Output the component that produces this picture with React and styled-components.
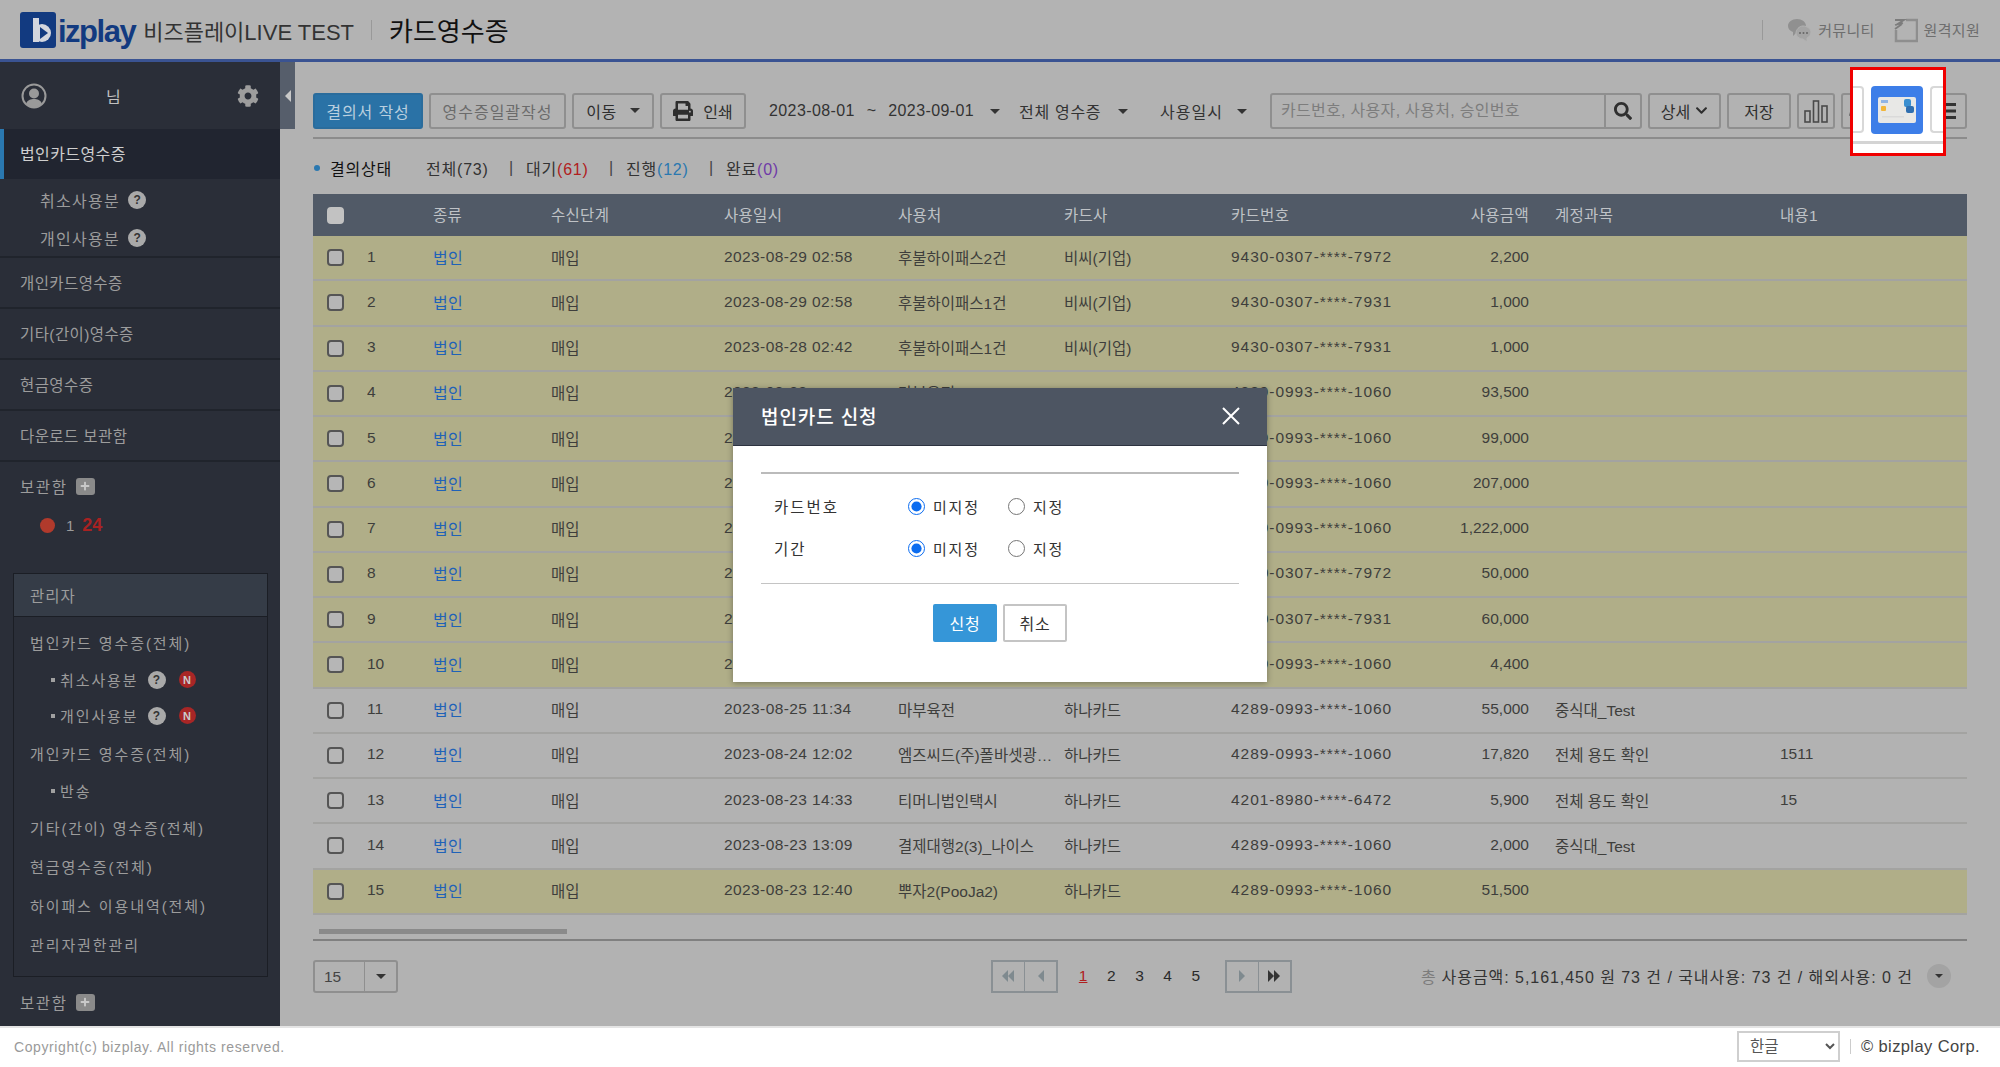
import React from "react";
import styled, { createGlobalStyle } from "styled-components";
import { FaPrint, FaSearch, FaCog, FaChevronDown, FaPlus } from "react-icons/fa";

const FONT = `"Liberation Sans", "Noto Sans CJK KR", sans-serif`;

const Global = createGlobalStyle`
  html, body { margin: 0; padding: 0; height: 100%; }
  body { font-family: ${FONT}; font-size: 16px; background: #fff; overflow: hidden; }
  #root { height: 100%; }
  * { box-sizing: border-box; }
`;

const Page = styled.div`
  position: relative;
  width: 2000px;
  height: 1067px;
  display: flex;
  flex-direction: column;
  overflow: hidden;
`;

const Header = styled.header`
  height: 62px;
  flex: none;
  display: flex;
  align-items: center;
  padding: 0 20px 0 20px;
  background: #b3b3b3;
  border-bottom: 3px solid #3a5392;
`;
const LogoText = styled.span`
  font-size: 31px;
  font-weight: 700;
  color: #123a80;
  letter-spacing: -1.5px;
  margin: 4px 0 0 2px;
  line-height: 1;
`;
const ServiceName = styled.span`
  font-size: 22px;
  color: #333;
  margin-left: 8px;
`;
const HeadDivider = styled.span`
  width: 1px;
  height: 20px;
  background: #999;
  margin: 0 ${(p) => p.$space || 17}px;
`;
const PageName = styled.span`
  font-size: 26px;
  color: #111;
`;
const HeadRight = styled.div`
  margin-left: auto;
  display: flex;
  align-items: center;
  color: #6e6e6e;
  font-size: 15px;
  letter-spacing: 0.3px;
`;
const HeadLink = styled.span`
  display: flex;
  align-items: center;
  gap: 6px;
  margin-right: 19px;
  &:last-child { margin-right: 0; }
`;

const Body = styled.div`
  flex: 1;
  display: flex;
  min-height: 0;
`;

const Sidebar = styled.aside`
  position: relative;
  width: 280px;
  flex: none;
  background: #2a2e38;
  color: #9c9c9c;
  font-size: 15.5px;
`;
const Handle = styled.span`
  position: absolute;
  left: 280px;
  top: 0;
  width: 15px;
  height: 67px;
  background: #565e6b;
  display: flex;
  align-items: center;
  justify-content: center;
`;
const Profile = styled.div`
  height: 67px;
  display: flex;
  align-items: center;
  padding: 0 21px 0 21px;
  color: #c0c0c0;
`;
const ProfileName = styled.span`
  margin-left: 59px;
  flex: 1;
  font-size: 16px;
`;
const ActiveItem = styled.div`
  height: 50px;
  display: flex;
  align-items: center;
  padding: 0 0 2px 16px;
  background: #212530;
  border-left: 4px solid #2a78b0;
  color: #cfcfcf;
  font-size: 16px;
  letter-spacing: 0.4px;
`;
const SubBlock = styled.div`
  padding-top: 2px;
  height: 79px;
  border-bottom: 2px solid #20242c;
`;
const SubItem = styled.div`
  height: 38px;
  display: flex;
  align-items: center;
  gap: 8px;
  padding-left: 40px;
  font-size: 16px;
  letter-spacing: 1.3px;
`;
const Help = styled.span`
  width: 18px;
  height: 18px;
  border-radius: 50%;
  background: #a9a9a9;
  color: #333;
  font-size: 12px;
  font-weight: 700;
  letter-spacing: 0;
  display: flex;
  align-items: center;
  justify-content: center;
  margin-left: ${(p) => p.$left || 0}px;
`;
const NavItem = styled.div`
  height: 51px;
  display: flex;
  align-items: center;
  padding: 0 0 2px 20px;
  border-bottom: 2px solid #20242c;
  font-size: 15.5px;
  letter-spacing: 0.4px;
`;
const BoxRow = styled.div`
  height: 38px;
  display: flex;
  align-items: center;
  gap: 8px;
  padding: 0 0 2px 20px;
  margin-top: ${(p) => p.$top || 0}px;
  font-size: 15.5px;
  letter-spacing: 1.6px;
`;
const PlusBtn = styled.span`
  width: 19px;
  height: 17px;
  border-radius: 3px;
  background: #8a8a8a;
  color: #c9c9c9;
  display: flex;
  align-items: center;
  justify-content: center;
  font-size: 10px;
`;
const FolderRow = styled.div`
  height: 38px;
  display: flex;
  align-items: center;
  padding-left: 40px;
  font-size: 15px;
`;
const FolderDot = styled.span`
  width: 15px;
  height: 15px;
  border-radius: 50%;
  background: #b13a2c;
  margin-right: 11px;
`;
const FolderCount = styled.b`
  color: #a82222;
  font-size: 18px;
  margin-left: 8px;
`;
const AdminBox = styled.div`
  width: 255px;
  height: 404px;
  margin: 29px 0 7px 13px;
  border: 1px solid #1b1e25;
`;
const AdminHead = styled.div`
  height: 43px;
  display: flex;
  align-items: center;
  padding-left: 16px;
  background: #353c47;
  border-bottom: 1px solid #1b1e25;
  font-size: 15.5px;
  letter-spacing: 1px;
`;
const AdminList = styled.div`
  padding-top: 6px;
`;
const AdminItem = styled.div`
  height: 38.8px;
  display: flex;
  align-items: center;
  padding-left: 16px;
  font-size: 15px;
  letter-spacing: 1.9px;
`;
const AdminSub = styled.div`
  height: 36px;
  display: flex;
  align-items: center;
  padding-left: 37px;
  font-size: 15px;
  letter-spacing: 1.9px;
  &::before {
    content: "";
    width: 4px;
    height: 4px;
    background: #a0a0a0;
    margin-right: 5px;
  }
`;
const NewBadge = styled.span`
  width: 17px;
  height: 17px;
  border-radius: 50%;
  background: #a82626;
  color: #ccc;
  font-size: 11px;
  font-weight: 700;
  letter-spacing: 0;
  display: flex;
  align-items: center;
  justify-content: center;
  margin-left: 13px;
`;

const Main = styled.main`
  flex: 1;
  min-width: 0;
  padding: 31px 33px 0;
  background: #b2b2b2;
  color: #3c3c3c;
`;
const Toolbar = styled.div`
  display: flex;
  gap: 6px;
  height: 46px;
  padding-bottom: 8px;
  border-bottom: 2px solid #8c8c8c;
`;
const Btn = styled.span`
  width: ${(p) => p.$w}px;
  height: 36px;
  flex: none;
  display: flex;
  align-items: center;
  justify-content: center;
  gap: ${(p) => p.$gap || 0}px;
  padding-bottom: 1px;
  border: 2px solid ${(p) => (p.$primary ? "#2a6c9c" : "#8f8f8f")};
  border-radius: 3px;
  background: ${(p) => (p.$primary ? "#2a72a6" : "transparent")};
  color: ${(p) => (p.$primary ? "#b9cfdf" : p.$faint ? "#6b6b6b" : "#2e2e2e")};
  font-size: 16px;
  letter-spacing: ${(p) => p.$spacing || 0}px;
`;
const PartialBtn = styled(Btn)`
  justify-content: flex-start;
  padding-left: 0;
`;
const Filter = styled.span`
  width: ${(p) => p.$w}px;
  margin-left: ${(p) => p.$left}px;
  flex: none;
  height: 36px;
  display: flex;
  align-items: center;
  justify-content: space-between;
  white-space: nowrap;
  font-size: 16px;
  letter-spacing: ${(p) => p.$spacing || 0}px;
  word-spacing: ${(p) => p.$words || 0}px;
  color: #333;
`;
const Caret = styled.span`
  width: 0;
  height: 0;
  flex: none;
  border-left: ${(p) => p.$size || 5}px solid transparent;
  border-right: ${(p) => p.$size || 5}px solid transparent;
  border-top: ${(p) => p.$size || 5}px solid #333;
`;
const Search = styled.div`
  width: 372px;
  flex: none;
  height: 36px;
  margin-left: 17px;
  display: flex;
  border: 2px solid #8f8f8f;
  border-radius: 3px;
`;
const SearchInput = styled.input`
  flex: 1;
  min-width: 0;
  border: 0;
  outline: 0;
  background: transparent;
  padding: 0 9px;
  font: 16px ${FONT};
  letter-spacing: 0.3px;
  &::placeholder { color: #7d7d7d; opacity: 1; }
`;
const SearchBtn = styled.span`
  width: 36px;
  display: flex;
  align-items: center;
  justify-content: center;
  border-left: 2px solid #8f8f8f;
  color: #2f2f2f;
  font-size: 18px;
`;
const MenuBtn = styled(Btn)`
  margin-left: auto;
`;

const StatusRow = styled.div`
  height: 55px;
  display: flex;
  align-items: center;
  font-size: 16px;
  letter-spacing: 0.8px;
  color: #333;
  padding-top: 2px;
`;
const StatusDot = styled.span`
  width: 6px;
  height: 6px;
  border-radius: 50%;
  background: #2a78b0;
  margin: 0 10px 0 1px;
`;
const StatusTitle = styled.span`
  color: #111;
  width: 96px;
`;
const StatusItem = styled.span`
  width: ${(p) => p.$w || 83}px;
`;
const StatusSep = styled.span`
  width: 17px;
  color: #444;
`;
const Num = styled.span`
  color: ${(p) => p.$color};
`;

const TABLE_COLUMNS = "54px 66px 118px 173px 174px 166px 167px 200px 98px 251px 187px";

const TableHead = styled.div`
  display: grid;
  grid-template-columns: ${TABLE_COLUMNS};
  height: 42px;
  align-items: center;
  background: #515a67;
  color: #bfc2c6;
  font-size: 15.5px;
  & > span { padding-bottom: 3px; letter-spacing: 0.3px; }
`;
const Row = styled.div`
  display: grid;
  grid-template-columns: ${TABLE_COLUMNS};
  height: 45.25px;
  align-items: center;
  background: ${(p) => (p.$hl ? "#b0ae88" : "transparent")};
  border-bottom: 2px solid #a3a3a1;
  font-size: 15.5px;
  color: #3e3e3c;
  white-space: nowrap;
`;
const Cell = styled.span`
  overflow: hidden;
  text-overflow: ellipsis;
  padding: 0 8px 2px 0;
  letter-spacing: ${(p) => p.$spacing || 0}px;
`;
const Amount = styled(Cell)`
  text-align: right;
  padding-right: 0;
`;
const Account = styled(Cell)`
  padding-left: 26px;
`;
const Kind = styled(Cell)`
  color: #1f62b8;
  font-size: 16px;
  letter-spacing: 0.4px;
`;
const Check = styled.input.attrs({ type: "checkbox" })`
  appearance: none;
  width: 17px;
  height: 17px;
  margin: 0 0 0 14px;
  border: 2px solid ${(p) => (p.$head ? "#c2c2c2" : "#555")};
  border-radius: 4px;
  background: ${(p) => (p.$head ? "#c2c2c2" : "#b6b6b6")};
`;
const Scrollbar = styled.div`
  width: 248px;
  height: 5px;
  margin: 14px 0 0 6px;
  background: #8a8a8a;
`;
const Rule = styled.div`
  height: 2px;
  margin-top: 5px;
  background: #808080;
`;
const BottomBar = styled.div`
  display: flex;
  align-items: center;
  height: 33px;
  margin-top: 19px;
  font-size: 15.5px;
  color: #2c2c2c;
`;
const PageSize = styled.div`
  width: 85px;
  height: 33px;
  display: flex;
  border: 2px solid #8f8f8f;
  border-radius: 3px;
  margin-right: 593px;
  color: #444;
`;
const PageSizeValue = styled.span`
  flex: 1;
  padding-left: 9px;
  line-height: 29px;
`;
const PageSizeArrow = styled.span`
  width: 32px;
  display: flex;
  align-items: center;
  justify-content: center;
  border-left: 1px solid #8f8f8f;
`;
const PagerGroup = styled.div`
  width: 67px;
  height: 33px;
  flex: none;
  display: flex;
  border: 2px solid #8a9094;
`;
const PagerBtn = styled.span`
  flex: 1;
  display: flex;
  align-items: center;
  justify-content: center;
  & + & { border-left: 1px solid #8a9094; }
`;
const PageNums = styled.div`
  display: flex;
  margin: 0 15px 0 11px;
`;
const PageNum = styled.span`
  width: 28.2px;
  text-align: center;
  color: ${(p) => (p.$on ? "#b02020" : "#2a2a2a")};
  text-decoration: ${(p) => (p.$on ? "underline" : "none")};
`;
const Summary = styled.div`
  margin-left: auto;
  display: flex;
  align-items: center;
  padding-right: 16px;
  white-space: pre;
  color: #333;
  font-size: 16px;
  letter-spacing: 0.95px;
`;
const SummaryFirst = styled.span`
  color: #7c7c7c;
  margin-right: 5px;
`;
const SummaryCaret = styled.span`
  width: 24px;
  height: 24px;
  border-radius: 50%;
  background: #a3a3a3;
  display: flex;
  align-items: center;
  justify-content: center;
  margin-left: 14px;
`;

const Footer = styled.footer`
  height: 41px;
  flex: none;
  display: flex;
  align-items: center;
  padding: 0 20px 2px 14px;
  background: #fff;
  border-top: 2px solid #e4e4e4;
`;
const Copy = styled.span`
  color: #9a9a9a;
  font-size: 14px;
  letter-spacing: 0.6px;
`;
const LangSelect = styled.select`
  width: 103px;
  height: 31px;
  margin-left: auto;
  padding-left: 7px;
  border: 2px solid #cfcfcf;
  background: #fff;
  color: #555;
  font: 15.5px ${FONT};
`;
const FootDivider = styled.span`
  width: 1px;
  height: 15px;
  background: #ccc;
  margin: 0 10px;
`;
const Corp = styled.span`
  color: #444;
  font-size: 16.5px;
  letter-spacing: 0.4px;
`;

const Modal = styled.div`
  position: absolute;
  left: 733px;
  top: 388px;
  width: 534px;
  height: 294px;
  display: flex;
  flex-direction: column;
  background: #fff;
  box-shadow: 0 1px 6px rgba(0, 0, 0, 0.35);
`;
const ModalHead = styled.div`
  height: 58px;
  flex: none;
  display: flex;
  align-items: center;
  justify-content: space-between;
  padding: 0 27px 2px 28px;
  background: #4d5562;
  border-bottom: 1px solid #2d3340;
  color: #fff;
  font-size: 19px;
  letter-spacing: 0.9px;
  font-weight: 500;
`;
const ModalBody = styled.div`
  margin: 26px 28px 0;
  padding: 11px 0 14px;
  border-top: 2px solid #bbb;
  border-bottom: 1px solid #c4c4c4;
`;
const FormRow = styled.div`
  height: 42px;
  display: flex;
  align-items: center;
  padding-left: 13px;
  font-size: 15.5px;
  color: #333;
`;
const FormLabel = styled.span`
  width: 134px;
  letter-spacing: 2px;
`;
const RadioLabel = styled.label`
  width: 100px;
  display: flex;
  align-items: center;
  gap: 8px;
  font-size: 15px;
  letter-spacing: 1.8px;
`;
const Radio = styled.input.attrs({ type: "radio" })`
  width: 17px;
  height: 17px;
  margin: 0;
  accent-color: #0b6cf0;
`;
const ModalActions = styled.div`
  display: flex;
  justify-content: center;
  gap: 6px;
  margin-top: 20px;
`;
const ModalBtn = styled.button`
  width: 64px;
  height: 38px;
  border: 2px solid ${(p) => (p.$primary ? "#3596d8" : "#c4c4c4")};
  border-radius: 2px;
  background: ${(p) => (p.$primary ? "#3596d8" : "#fff")};
  color: ${(p) => (p.$primary ? "#fff" : "#333")};
  font: 16px ${FONT};
  letter-spacing: 0.8px;
  padding: 0;
`;

const Highlight = styled.div`
  position: absolute;
  left: 1850px;
  top: 67px;
  width: 96px;
  height: 89px;
  display: flex;
  gap: 7px;
  padding-top: 16px;
  background: #fff;
  border: 3px solid #f00000;
  overflow: hidden;
`;
const HighlightRule = styled.span`
  position: absolute;
  left: 0;
  right: 0;
  bottom: 9px;
  height: 3px;
  background: #d4d4d4;
`;
const HighlightSide = styled.span`
  width: 11px;
  height: 47px;
  flex: none;
  border: 2px solid #d8d8d8;
  border-left: 0;
  border-radius: 0 4px 4px 0;
`;
const HighlightRight = styled.span`
  width: 16px;
  height: 47px;
  flex: none;
  border: 2px solid #d8d8d8;
  border-right: 0;
  border-radius: 4px 0 0 4px;
`;
const CardBtn = styled.span`
  width: 52px;
  height: 48px;
  flex: none;
  display: flex;
  align-items: center;
  justify-content: center;
  border-radius: 4px;
  background: #3d7ee8;
`;

function Logo() {
  return (
    <svg width="36" height="36" viewBox="0 0 36 36">
      <rect width="36" height="36" rx="3" fill="#123a80" />
      <rect x="13" y="6" width="6" height="24" fill="#d3d6de" />
      <circle cx="22" cy="21" r="9" fill="#d3d6de" />
      <polygon points="20,15 28,21 20,27" fill="#123a80" />
    </svg>
  );
}

function Avatar() {
  return (
    <svg width="26" height="26" viewBox="0 0 26 26">
      <circle cx="13" cy="13" r="11.5" fill="none" stroke="#9a9a9a" strokeWidth="2" />
      <circle cx="13" cy="10.5" r="5" fill="#9a9a9a" />
      <path d="M5 21c1-4 5-5 8-5s7 1 8 5a11 11 0 0 1-16 0z" fill="#9a9a9a" />
    </svg>
  );
}

function Community() {
  return (
    <svg width="25" height="26" viewBox="0 0 25 26">
      <path d="M10 2c5 0 9 3 9 7s-4 7-9 7l-1 0-3 3 0-4C3 14 1 12 1 9c0-4 4-7 9-7z" fill="#909090" />
      <path d="M16 9c4 0 8 3 8 6s-2 5-4 6l0 4-4-3c-4 0-7-3-7-6s3-7 7-7z" fill="#a4a4a4" stroke="#b3b3b3" strokeWidth="1" />
      <circle cx="13" cy="16" r="1" fill="#666" />
      <circle cx="16.500" cy="16" r="1" fill="#666" />
      <circle cx="20" cy="16" r="1" fill="#666" />
    </svg>
  );
}

function Remote() {
  return (
    <svg width="24" height="26" viewBox="0 0 24 26">
      <path d="M12 3h11v21H2V13" fill="none" stroke="#8e8e8e" strokeWidth="2.500" />
      <path d="M1 3h9L2 8M1 8l8-2M1 12l7-5" fill="none" stroke="#7c7c7c" strokeWidth="1.800" />
    </svg>
  );
}

function Bars() {
  return (
    <svg width="26" height="26" viewBox="0 0 26 26" fill="none" stroke="#4a4a4a" strokeWidth="1.600">
      <rect x="2" y="13" width="5" height="11" />
      <rect x="10.500" y="3" width="5" height="21" />
      <rect x="19" y="8" width="5" height="16" />
    </svg>
  );
}

function Hamburger() {
  return (
    <svg width="14" height="16" viewBox="0 0 14 16" fill="#333">
      <rect y="0" width="14" height="3" />
      <rect y="6.500" width="14" height="3" />
      <rect y="13" width="14" height="3" />
    </svg>
  );
}

function PencilTip() {
  return (
    <svg width="14" height="14" viewBox="0 0 14 14" fill="#555">
      <polygon points="6,12 7,8 11,3 12,6 8,11" />
    </svg>
  );
}

function CardIcon() {
  return (
    <svg width="38" height="26" viewBox="0 0 38 26">
      <rect width="38" height="26" rx="2" fill="#e8e8e6" />
      <rect x="3" y="3" width="7" height="3" fill="#8fb4e6" />
      <rect x="3" y="9" width="5" height="5" rx="1" fill="#f2b63a" />
      <rect x="26" y="2" width="7" height="8" rx="2" fill="#3a8fd0" />
      <rect x="28" y="9" width="8" height="7" rx="2" fill="#2f6fb0" />
      <rect x="4" y="19" width="22" height="1.500" fill="#dadada" />
    </svg>
  );
}

function Triangles({ count = 1, dir = "left", color = "#7f8a8f" }) {
  const points = dir === "left" ? "7,1 7,13 1,7" : "1,1 1,13 7,7";
  return (
    <svg width={count * 7 + 1} height="14" viewBox={`0 0 ${count * 7 + 1} 14`} fill={color}>
      {Array.from({ length: count }).map((_, i) => (
        <polygon key={i} points={points} transform={`translate(${i * 6} 0)`} />
      ))}
    </svg>
  );
}

// rows 5-10 sit behind the dialog, only the date start and card number show
const ROWS = [
  ["2023-08-29 02:58", "후불하이패스2건", "비씨(기업)", "9430-0307-****-7972", "2,200", "", "", true],
  ["2023-08-29 02:58", "후불하이패스1건", "비씨(기업)", "9430-0307-****-7931", "1,000", "", "", true],
  ["2023-08-28 02:42", "후불하이패스1건", "비씨(기업)", "9430-0307-****-7931", "1,000", "", "", true],
  ["2023-08-28", "마부육전", "", "4289-0993-****-1060", "93,500", "", "", true],
  ["2023-08-28", "", "", "4289-0993-****-1060", "99,000", "", "", true],
  ["2023-08-27", "", "", "4289-0993-****-1060", "207,000", "", "", true],
  ["2023-08-27", "", "", "4289-0993-****-1060", "1,222,000", "", "", true],
  ["2023-08-26", "", "", "9430-0307-****-7972", "50,000", "", "", true],
  ["2023-08-26", "", "", "9430-0307-****-7931", "60,000", "", "", true],
  ["2023-08-25", "", "", "4289-0993-****-1060", "4,400", "", "", true],
  ["2023-08-25 11:34", "마부육전", "하나카드", "4289-0993-****-1060", "55,000", "중식대_Test", "", false],
  ["2023-08-24 12:02", "엠즈씨드(주)폴바셋광화문점", "하나카드", "4289-0993-****-1060", "17,820", "전체 용도 확인", "1511", false],
  ["2023-08-23 14:33", "티머니법인택시", "하나카드", "4201-8980-****-6472", "5,900", "전체 용도 확인", "15", false],
  ["2023-08-23 13:09", "결제대행2(3)_나이스", "하나카드", "4289-0993-****-1060", "2,000", "중식대_Test", "", false],
  ["2023-08-23 12:40", "뿌자2(PooJa2)", "하나카드", "4289-0993-****-1060", "51,500", "", "", true],
];

export default function App() {
  return (
    <Page>
      <Global />
      <Header>
        <Logo />
        <LogoText>izplay</LogoText>
        <ServiceName>비즈플레이LIVE TEST</ServiceName>
        <HeadDivider />
        <PageName>카드영수증</PageName>
        <HeadRight>
          <HeadDivider $space={24} />
          <HeadLink><Community />커뮤니티</HeadLink>
          <HeadLink><Remote />원격지원</HeadLink>
        </HeadRight>
      </Header>

      <Body>
        <Sidebar>
          <Handle><Triangles color="#c8c8c8" /></Handle>
          <Profile>
            <Avatar />
            <ProfileName>님</ProfileName>
            <FaCog size={22} color="#9d9d9d" />
          </Profile>
          <ActiveItem>법인카드영수증</ActiveItem>
          <SubBlock>
            <SubItem>취소사용분<Help>?</Help></SubItem>
            <SubItem>개인사용분<Help>?</Help></SubItem>
          </SubBlock>
          <NavItem>개인카드영수증</NavItem>
          <NavItem>기타(간이)영수증</NavItem>
          <NavItem>현금영수증</NavItem>
          <NavItem>다운로드 보관함</NavItem>
          <BoxRow $top={6}>보관함<PlusBtn><FaPlus /></PlusBtn></BoxRow>
          <FolderRow><FolderDot />1<FolderCount>24</FolderCount></FolderRow>
          <AdminBox>
            <AdminHead>관리자</AdminHead>
            <AdminList>
              <AdminItem>법인카드 영수증(전체)</AdminItem>
              <AdminSub>취소사용분<Help $left={9}>?</Help><NewBadge>N</NewBadge></AdminSub>
              <AdminSub>개인사용분<Help $left={9}>?</Help><NewBadge>N</NewBadge></AdminSub>
              <AdminItem>개인카드 영수증(전체)</AdminItem>
              <AdminSub>반송</AdminSub>
              <AdminItem>기타(간이) 영수증(전체)</AdminItem>
              <AdminItem>현금영수증(전체)</AdminItem>
              <AdminItem>하이패스 이용내역(전체)</AdminItem>
              <AdminItem>관리자권한관리</AdminItem>
            </AdminList>
          </AdminBox>
          <BoxRow>보관함<PlusBtn><FaPlus /></PlusBtn></BoxRow>
        </Sidebar>

        <Main>
          <Toolbar>
            <Btn $w={110} $primary $spacing={0.9}>결의서 작성</Btn>
            <Btn $w={137} $faint $spacing={1}>영수증일괄작성</Btn>
            <Btn $w={82} $gap={13} $spacing={0.5}>이동<Caret /></Btn>
            <Btn $w={86} $gap={10}><FaPrint size={20} />인쇄</Btn>
            <Filter $w={231} $left={17} $spacing={0.4} $words={7}>2023-08-01 ~ 2023-09-01<Caret /></Filter>
            <Filter $w={109} $left={13} $spacing={0.7}>전체 영수증<Caret /></Filter>
            <Filter $w={87} $left={26} $spacing={1}>사용일시<Caret /></Filter>
            <Search>
              <SearchInput placeholder="카드번호, 사용자, 사용처, 승인번호" readOnly />
              <SearchBtn><FaSearch /></SearchBtn>
            </Search>
            <Btn $w={73} $gap={5}>상세<FaChevronDown size={13} /></Btn>
            <Btn $w={64}>저장</Btn>
            <Btn $w={38}><Bars /></Btn>
            <PartialBtn $w={44}><PencilTip /></PartialBtn>
            <MenuBtn $w={37}><Hamburger /></MenuBtn>
          </Toolbar>

          <StatusRow>
            <StatusDot />
            <StatusTitle>결의상태</StatusTitle>
            <StatusItem>전체(73)</StatusItem>
            <StatusSep>|</StatusSep>
            <StatusItem>대기<Num $color="#b02020">(61)</Num></StatusItem>
            <StatusSep>|</StatusSep>
            <StatusItem>진행<Num $color="#2a78b0">(12)</Num></StatusItem>
            <StatusSep>|</StatusSep>
            <StatusItem>완료<Num $color="#6f3aa8">(0)</Num></StatusItem>
          </StatusRow>

          <TableHead>
            <Check $head />
            <span />
            <span>종류</span>
            <span>수신단계</span>
            <span>사용일시</span>
            <span>사용처</span>
            <span>카드사</span>
            <span>카드번호</span>
            <Amount>사용금액</Amount>
            <Account>계정과목</Account>
            <span>내용1</span>
          </TableHead>
          {ROWS.map((r, i) => (
            <Row key={i} $hl={r[7]}>
              <Check />
              <Cell>{i + 1}</Cell>
              <Kind>법인</Kind>
              <Cell>매입</Cell>
              <Cell $spacing={0.4}>{r[0]}</Cell>
              <Cell>{r[1]}</Cell>
              <Cell>{r[2]}</Cell>
              <Cell $spacing={0.95}>{r[3]}</Cell>
              <Amount>{r[4]}</Amount>
              <Account>{r[5]}</Account>
              <Cell>{r[6]}</Cell>
            </Row>
          ))}

          <Scrollbar />
          <Rule />

          <BottomBar>
            <PageSize>
              <PageSizeValue>15</PageSizeValue>
              <PageSizeArrow><Caret /></PageSizeArrow>
            </PageSize>
            <PagerGroup>
              <PagerBtn><Triangles count={2} /></PagerBtn>
              <PagerBtn><Triangles /></PagerBtn>
            </PagerGroup>
            <PageNums>
              <PageNum $on>1</PageNum>
              <PageNum>2</PageNum>
              <PageNum>3</PageNum>
              <PageNum>4</PageNum>
              <PageNum>5</PageNum>
            </PageNums>
            <PagerGroup>
              <PagerBtn><Triangles dir="right" /></PagerBtn>
              <PagerBtn><Triangles count={2} dir="right" color="#333" /></PagerBtn>
            </PagerGroup>
            <Summary>
              <SummaryFirst>총</SummaryFirst>
              사용금액: 5,161,450 원 73 건 / 국내사용: 73 건 / 해외사용: 0 건
              <SummaryCaret><Caret $size={4} /></SummaryCaret>
            </Summary>
          </BottomBar>
        </Main>
      </Body>

      <Footer>
        <Copy>Copyright(c) bizplay. All rights reserved.</Copy>
        <LangSelect defaultValue="ko">
          <option value="ko">한글</option>
        </LangSelect>
        <FootDivider />
        <Corp>© bizplay Corp.</Corp>
      </Footer>

      <Modal>
        <ModalHead>
          법인카드 신청
          <svg width="18" height="18" viewBox="0 0 18 18" stroke="#fff" strokeWidth="2">
            <path d="M1 1l16 16M17 1L1 17" />
          </svg>
        </ModalHead>
        <ModalBody>
          <FormRow>
            <FormLabel>카드번호</FormLabel>
            <RadioLabel><Radio name="card" defaultChecked />미지정</RadioLabel>
            <RadioLabel><Radio name="card" />지정</RadioLabel>
          </FormRow>
          <FormRow>
            <FormLabel>기간</FormLabel>
            <RadioLabel><Radio name="term" defaultChecked />미지정</RadioLabel>
            <RadioLabel><Radio name="term" />지정</RadioLabel>
          </FormRow>
        </ModalBody>
        <ModalActions>
          <ModalBtn $primary>신청</ModalBtn>
          <ModalBtn>취소</ModalBtn>
        </ModalActions>
      </Modal>

      <Highlight>
        <HighlightSide />
        <CardBtn><CardIcon /></CardBtn>
        <HighlightRight />
        <HighlightRule />
      </Highlight>
    </Page>
  );
}
